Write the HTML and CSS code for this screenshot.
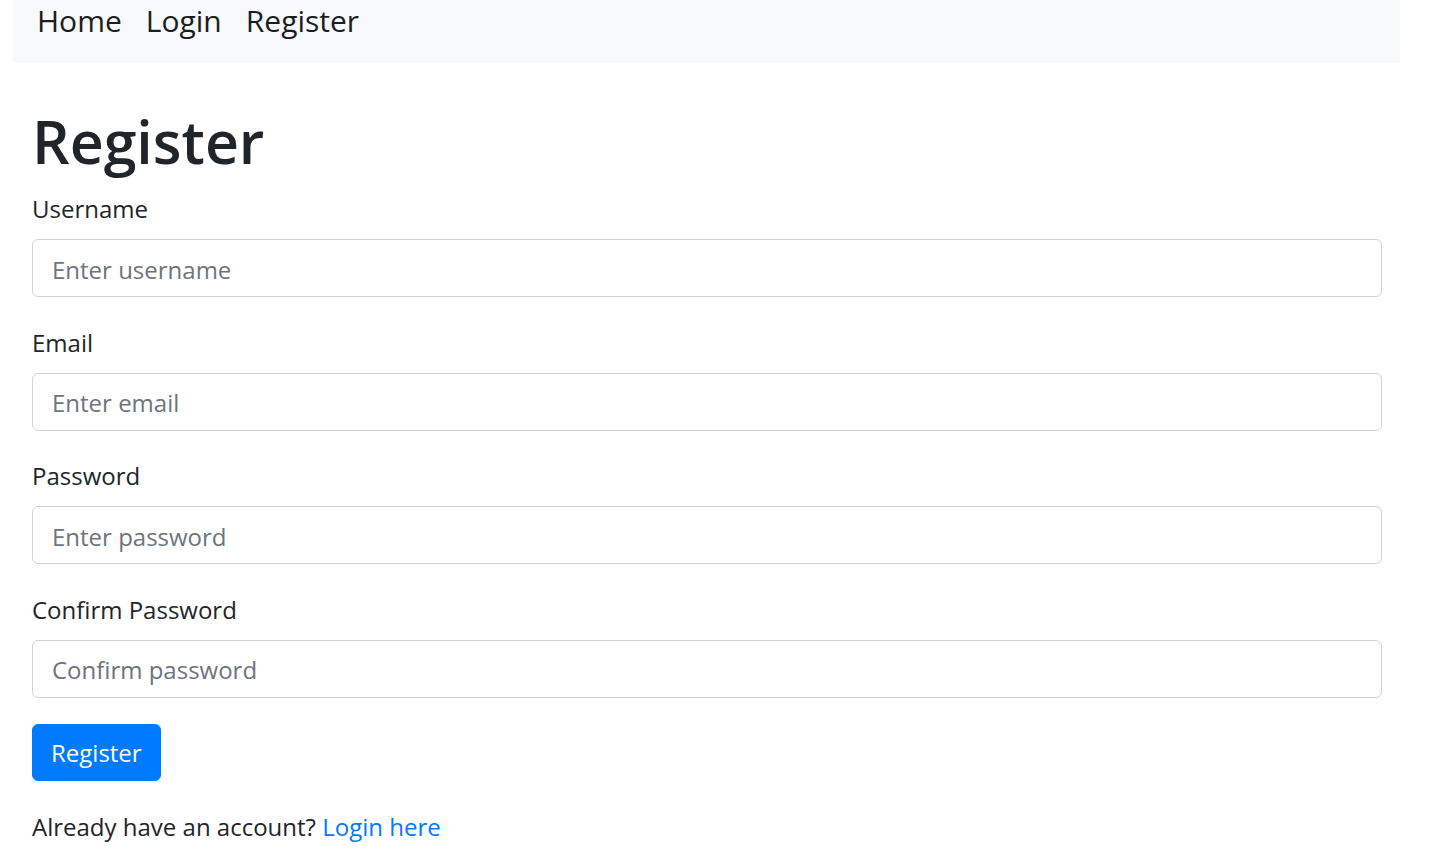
FILE: index.html
```html
<!DOCTYPE html>
<html lang="en">
<head>
<meta charset="utf-8">
<title>Register</title>
<link rel="stylesheet" href="styles.css">
</head>
<body>
<nav class="navbar">
  <a class="nav-link" href="#">Home</a>
  <a class="nav-link" href="#">Login</a>
  <a class="nav-link" href="#">Register</a>
</nav>
<main class="container">
  <h1 class="title">Register</h1>
  <form class="form">
    <div class="form-group">
      <label class="form-label" for="username">Username</label>
      <input class="form-control" id="username" type="text" placeholder="Enter username">
    </div>
    <div class="form-group">
      <label class="form-label" for="email">Email</label>
      <input class="form-control" id="email" type="email" placeholder="Enter email">
    </div>
    <div class="form-group">
      <label class="form-label" for="password">Password</label>
      <input class="form-control" id="password" type="password" placeholder="Enter password">
    </div>
    <div class="form-group form-group-last">
      <label class="form-label" for="confirm">Confirm Password</label>
      <input class="form-control" id="confirm" type="password" placeholder="Confirm password">
    </div>
    <button class="btn" type="submit">Register</button>
  </form>
  <p class="footer-text">Already have an account? <a class="link" href="#">Login here</a></p>
</main>
</body>
</html>
```
FILE: styles.css
```css
* { box-sizing: border-box; }
html, body {
  margin: 0;
  padding: 0;
  background: #fff;
}
body {
  font-family: "Open Sans", "Noto Sans", sans-serif;
  color: #212529;
  font-size: 24px;
}
.navbar {
  display: flex;
  align-items: flex-start;
  margin-left: 13px;
  width: 1387px;
  height: 63px;
  padding: 1px 0 0 12px;
  background: #f8f9fa;
}
.nav-link {
  font-size: 30px;
  line-height: 40px;
  padding: 0 12px;
  color: #1b1d1f;
  text-decoration: none;
}
.container {
  width: 1382px;
  padding-left: 32px;
}
.title {
  margin: 42px 0 14px;
  font-size: 59px;
  line-height: 72px;
  font-weight: 600;
}
.form { margin: 0; }
.form-group {
  display: flex;
  flex-direction: column;
  margin-bottom: 27.5px;
}
.form-group-last { margin-bottom: 26.5px; }
.form-label {
  font-size: 24px;
  line-height: 36px;
  margin-bottom: 12px;
}
.form-control {
  width: 1350px;
  height: 58px;
  padding: 11px 19px 9px;
  font-family: inherit;
  font-size: 24px;
  line-height: 36px;
  color: #495057;
  background: #fff;
  border: 1px solid #ced4da;
  border-radius: 6px;
  outline: none;
}
.form-control::placeholder { color: #6c757d; opacity: 1; }
.btn {
  display: flex;
  align-items: center;
  height: 57px;
  padding: 0 18px;
  font-family: inherit;
  font-size: 24px;
  line-height: 36px;
  color: #fff;
  background: #007bff;
  border: 1px solid #007bff;
  border-radius: 6px;
}
.footer-text {
  margin: 28px 0 0;
  font-size: 24px;
  line-height: 36px;
}
.link {
  color: #007bff;
  text-decoration: none;
}
```
